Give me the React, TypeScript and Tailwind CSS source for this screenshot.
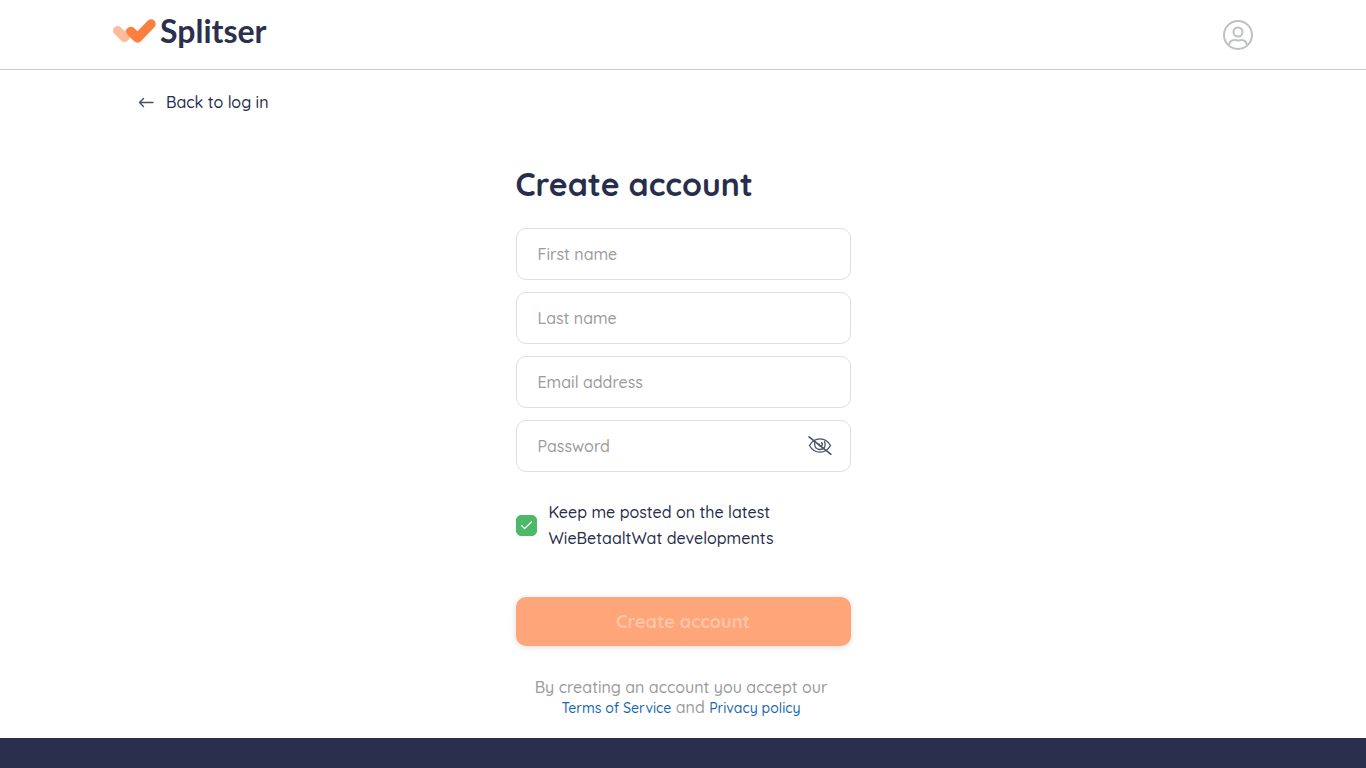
import React, { useState } from 'react';
import { Check } from 'lucide-react';

const FIELDS = [
    { id: 'firstName', label: 'First name', type: 'text' },
    { id: 'lastName', label: 'Last name', type: 'text' },
    { id: 'email', label: 'Email address', type: 'email' },
];

const inputClass =
    'block w-full h-[52px] px-[21px] bg-white border border-[#dfdfe2] rounded-[10px] text-base font-medium text-[#272e4b] placeholder:text-[#9b9b9b] placeholder:opacity-100 outline-none focus:border-[#272e4b]';

const Logo = () => (
    <a href="#" aria-label="Splitser" className="flex items-center gap-1 text-[#2b304d]">
        <svg width="44" height="28" viewBox="0 0 44 28" fill="none" strokeLinejoin="round" strokeLinecap="round">
            <path d="M5.500 13.500L12.500 20.500L18 15" stroke="#fdbb9b" strokeWidth="9" />
            <path d="M19 14.500L25.500 21L39 7" stroke="#fd7f40" strokeWidth="9.500" />
        </svg>
        <span className="font-['Lato',sans-serif] text-[32px] leading-10 font-bold">Splitser</span>
    </a>
);

const ProfileIcon = () => (
    <svg width="32" height="32" viewBox="0 0 32 32" fill="none" stroke="#bfc0c4" strokeWidth="2">
        <circle cx="16" cy="16" r="14" />
        <circle cx="16" cy="13" r="4.500" />
        <path d="M7 26.500C7.500 22.500 10 21 12.500 21C14.500 21 14.500 21.500 16 21.500C17.500 21.500 17.500 21 19.500 21C22 21 24.500 22.500 25 26.500" />
    </svg>
);

const BackArrow = () => (
    <svg width="16" height="16" viewBox="0 0 16 16" fill="none" stroke="#4a4f68" strokeWidth="1.400" strokeLinecap="round" strokeLinejoin="round">
        <path d="M15 8.500H1.500M5.500 4.500L1.500 8.500L5.500 12.500" />
    </svg>
);

const HiddenIcon = () => (
    <svg width="24" height="20" viewBox="0 0 24 20" fill="none" stroke="#4a4f66" strokeWidth="1.300" strokeLinecap="round">
        <path d="M1.500 9.500C4 5 7.500 2.800 12 2.800S20 5 22.500 9.500C20 14 16.500 16.200 12 16.200S4 14 1.500 9.500Z" />
        <path d="M7 5.500C5.500 9.500 7.500 13.500 12 13.500C16.500 13.500 18.500 9.500 16.500 5.500" />
        <path d="M11 8C11 10 12.500 10.800 13.500 10C14.500 9 14.500 7.500 13.500 6.500" />
        <path d="M1 0.800L23 18.300" strokeWidth="1.500" />
    </svg>
);

export default function App() {
    const [showPassword, setShowPassword] = useState(false);
    const [newsletter, setNewsletter] = useState(true);

    return (
        <div className="min-h-screen flex flex-col bg-white text-[#272e4b] font-medium font-['Quicksand','Lato',sans-serif]">
            <header className="border-b border-[#cacaca]">
                <div className="max-w-[1142px] h-[69px] mx-auto flex items-center justify-between">
                    <div className="pb-2">
                        <Logo />
                    </div>
                    <button type="button" aria-label="Profile">
                        <ProfileIcon />
                    </button>
                </div>
            </header>

            <main className="w-full max-w-[1142px] mx-auto px-[26px] pt-5 pb-5">
                <a href="#" className="inline-flex items-center gap-3 text-base leading-6">
                    <BackArrow />
                    Back to log in
                </a>

                <form className="w-full max-w-[335px] mx-auto mt-12" onSubmit={(e) => e.preventDefault()}>
                    <h1 className="text-[32px] leading-10 font-bold">Create account</h1>

                    <div className="mt-6 flex flex-col gap-3">
                        {FIELDS.map((field) => (
                            <input
                                key={field.id}
                                id={field.id}
                                type={field.type}
                                aria-label={field.label}
                                placeholder={field.label}
                                className={inputClass}
                            />
                        ))}
                        <div className="relative">
                            <input
                                id="password"
                                type={showPassword ? 'text' : 'password'}
                                aria-label="Password"
                                placeholder="Password"
                                className={inputClass}
                            />
                            <button
                                type="button"
                                aria-label="Show password"
                                onClick={() => setShowPassword(!showPassword)}
                                className="absolute inset-y-0 right-[19px]"
                            >
                                <HiddenIcon />
                            </button>
                        </div>
                    </div>

                    <div className="mt-[27px] flex items-center gap-3">
                        <span className="relative flex shrink-0">
                            <input
                                id="newsletter"
                                type="checkbox"
                                checked={newsletter}
                                onChange={(e) => setNewsletter(e.target.checked)}
                                className="size-[21px] appearance-none rounded-[5px] border border-[#4bb968] checked:bg-[#4bb968]"
                            />
                            {newsletter && (
                                <Check size={15} strokeWidth={2} className="absolute inset-0 m-auto text-white pointer-events-none" />
                            )}
                        </span>
                        <label htmlFor="newsletter" className="text-base leading-[26px]">
                            Keep me posted on the latest
                            <br />
                            WieBetaaltWat developments
                        </label>
                    </div>

                    <button
                        type="submit"
                        disabled
                        className="mt-[46px] block w-full h-[49px] rounded-[10px] bg-[#fea679] text-[#fec5a6] text-lg font-bold shadow-[0_1px_6px_rgba(0,0,0,0.15)]"
                    >
                        Create account
                    </button>

                    <p className="mt-[31px] pr-1 text-center text-base leading-5 text-[#9b9b9b]">
                        By creating an account you accept our
                        <br />
                        <a href="#" className="text-sm leading-5 text-[#1467b0]">Terms of Service</a>
                        {' and '}
                        <a href="#" className="text-sm leading-5 text-[#1467b0]">Privacy policy</a>
                    </p>
                </form>
            </main>

            <footer className="grow bg-[#292f4c]" />
        </div>
    );
}
